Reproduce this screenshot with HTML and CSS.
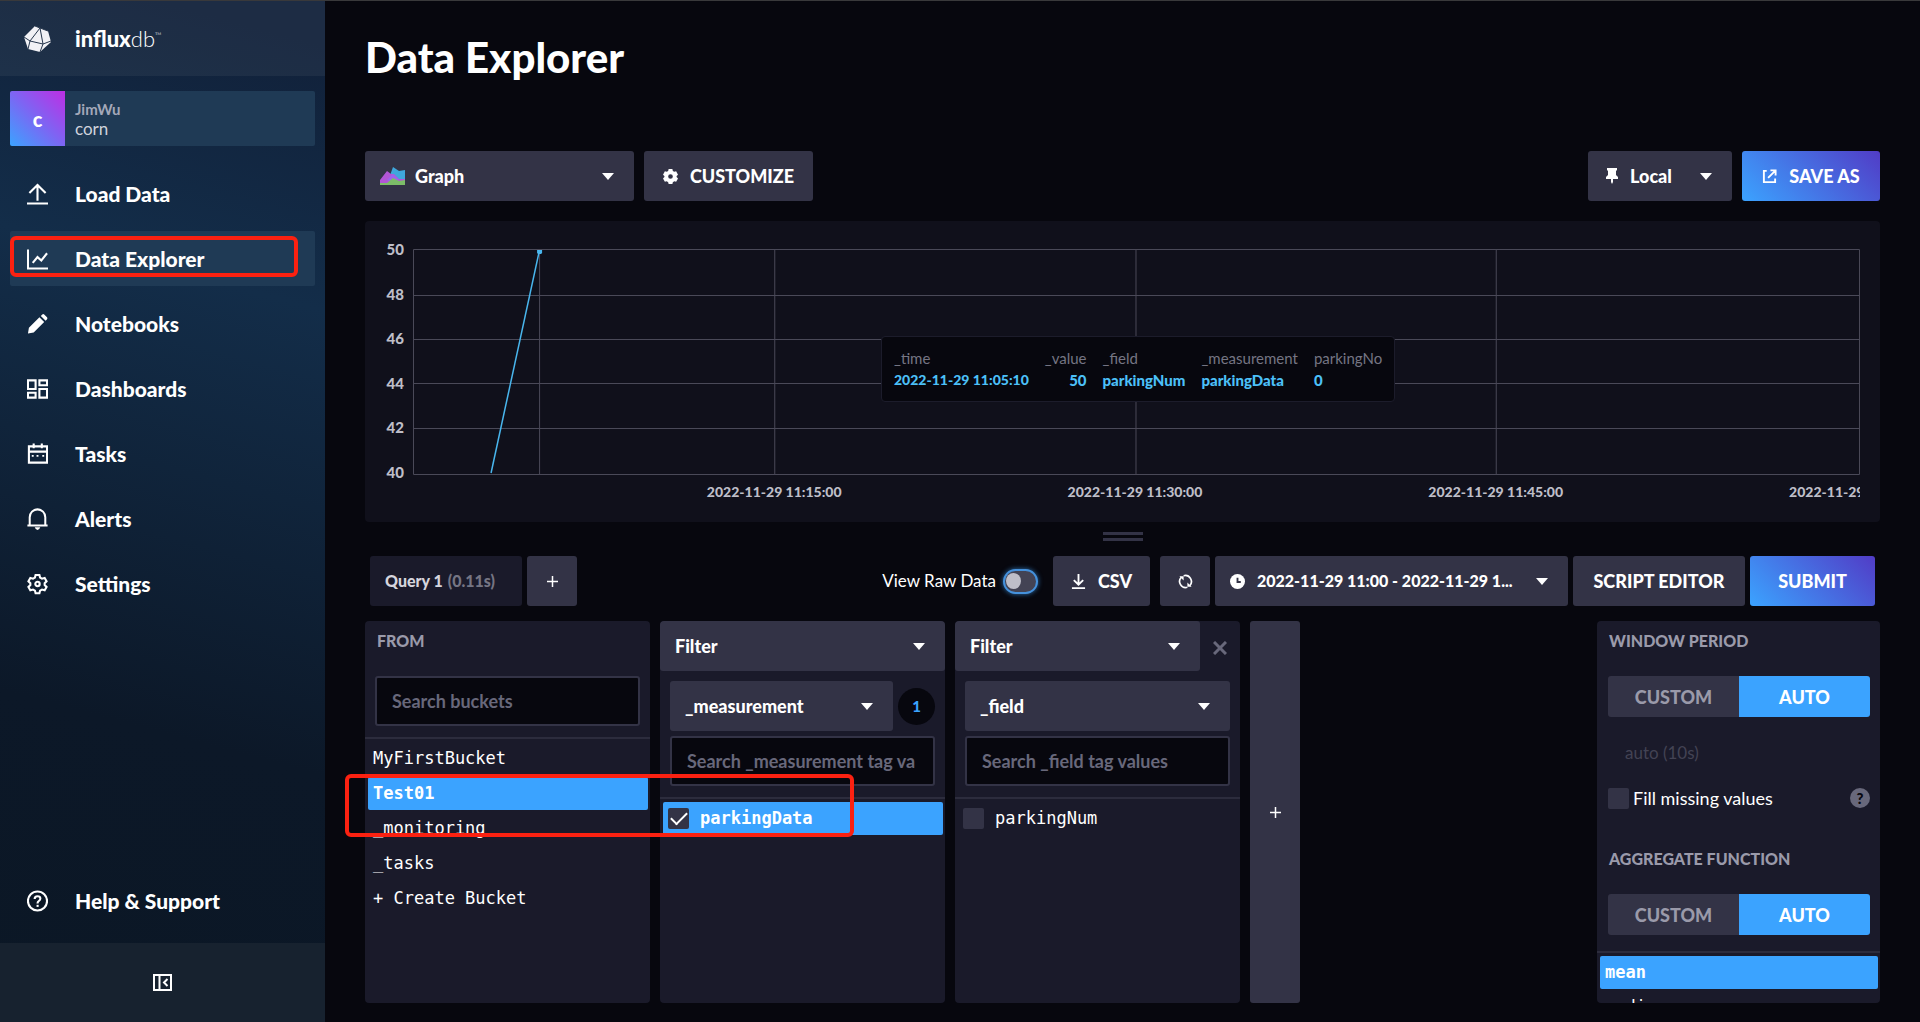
FILE: index.html
```html
<!DOCTYPE html>
<html lang="en">
<head>
<meta charset="utf-8">
<title>Data Explorer | InfluxDB</title>
<link rel="stylesheet" href="styles.css">
</head>
<body>
<svg class="sprite" width="0" height="0" aria-hidden="true">
  <symbol id="caret" viewBox="0 0 12 7"><path d="M0 0h12L6 7z" fill="currentColor"/></symbol>
  <symbol id="plus" viewBox="0 0 11 11"><path d="M5.500 0v11M0 5.500h11" stroke="currentColor" stroke-width="1.500"/></symbol>
</svg>
<div class="app">
  <nav class="sidebar">
    <a class="brand" href="#">
      <svg class="brand-mark" viewBox="0 0 27 27"><path d="M11 1L24 6L27 17L16 27L4 24L0 12z" fill="#f1f1f5"/><path d="M0 12l6 4 10-13L11 1M6 16l-2 8M16 3l8 3M16 3l3 16L6 16M19 19l-3 8M19 19l8-3" fill="none" stroke="#26364c"/></svg>
      <span class="brand-name"><b>influx</b>db<sup>™</sup></span>
    </a>
    <div class="menu">
      <a class="account" href="#">
        <span class="avatar">c</span>
        <span class="account-text"><b>JimWu</b><span>corn</span></span>
      </a>
      <a class="item" href="#"><svg viewBox="0 0 22 22"><path d="M11 18V2M2.500 10L11 1.500 19.500 10M0 21h22" /></svg>Load Data</a>
      <a class="item active" href="#"><svg viewBox="0 0 22 22"><path d="M1 1v20h21M6 15l5-6 4 3.500L21 5"/></svg>Data Explorer<span class="mark mark-nav"></span></a>
      <a class="item" href="#"><svg viewBox="0 0 22 22"><path class="solid" d="M1 21l1-6L13 4l5 5L7 20zM14.500 2.500L16 1q1-.7 2 0l3 3q.8 1 0 2l-1.500 1.500z"/></svg>Notebooks</a>
      <a class="item" href="#"><svg viewBox="0 0 22 22"><path d="M1 2h8v9H1zM13 2h8v5h-8zM1 15h8v5H1zM13 11h8v9h-8z"/></svg>Dashboards</a>
      <a class="item" href="#"><svg viewBox="0 0 22 22"><path d="M2 3h19v17H2zM2 8.500h19M7 0v5M15.500 0v5"/><path class="solid" d="M5 12h2v2H5zM10 12h2v2h-2zM16 12h2v2h-2z"/></svg>Tasks</a>
      <a class="item" href="#"><svg viewBox="0 0 22 24"><path d="M2.500 19v-9a8.500 8.500 0 0 1 17 0v9M0 19h22"/><path class="solid" d="M8 21h6q-1 3-3 3t-3-3z"/></svg>Alerts</a>
      <a class="item" href="#"><svg viewBox="0 0 22 22"><path d="M9 1.500h4l.7 2.800 2 1.100 2.800-.8 2 3.500-2 2v2l2 2-2 3.500-2.800-.8-2 1.100-.7 2.800H9l-.7-2.800-2-1.100-2.800.8-2-3.500 2-2v-2l-2-2 2-3.500 2.800.8 2-1.100z"/><circle cx="11" cy="11" r="2.300"/></svg>Settings</a>
      <a class="item help" href="#"><svg viewBox="0 0 22 22"><circle cx="11" cy="11" r="10"/><path d="M8 9q0-3 3-3t3 2.500q0 1.500-1.500 2.300T11 13.500"/><path class="solid" d="M10 15h2.200v2.200H10z"/></svg>Help &amp; Support</a>
    </div>
    <button class="collapse" aria-label="Collapse navigation"><svg viewBox="0 0 19 17"><path d="M1 1h17v15H1zM6.500 1v15M14.500 5L11 8.500l3.500 3.500" fill="none" stroke="currentColor" stroke-width="2"/></svg></button>
  </nav>

  <main class="main">
    <h1>Data Explorer</h1>
    <div class="bar view-bar">
      <label class="drop drop-view">
        <svg class="graph-icon" viewBox="0 0 25 18"><path d="M8 14L13 0l6 4 6-1v10z" fill="#3fa7dc"/><path d="M0 13l7-9 4 3h3l5 5h6v3L0 17z" fill="#b256d6"/><path d="M7 13l6-6 6 6-6 3z" fill="#9d64ee"/><path d="M0 16h7l6-5 6 3 6-1v5H0z" fill="#7cbd68"/></svg>
        <select aria-label="View type"><option>Graph</option></select><svg class="caret"><use href="#caret"/></svg>
      </label>
      <button class="btn btn-customize"><svg class="ico" viewBox="0 0 16 16"><path fill="currentColor" fill-rule="evenodd" d="M6 0h4l.5 2L12 3l2-.5 2 3.500-1.500 1.500v1L16 10l-2 3.500-2-.5-1.500 1-.5 2H6l-.5-2L4 13l-2 .5L0 10l1.500-1.500v-1L0 6l2-3.500L4 3l1.500-1zM8 5.500a2.500 2.500 0 1 0 0 5 2.500 2.500 0 0 0 0-5z"/></svg>CUSTOMIZE</button>
      <span class="spring"></span>
      <label class="drop drop-zone">
        <svg class="pin" viewBox="0 0 12 16"><path fill="currentColor" d="M1 0h10v2l-1 1v4l2 2v2H7v3l-1 2-1-2v-3H0V9l2-2V3L1 2z"/></svg>
        <select aria-label="Time zone"><option>Local</option></select><svg class="caret"><use href="#caret"/></svg>
      </label>
      <button class="btn primary btn-save"><svg class="ico" viewBox="0 0 16 16"><path fill="none" stroke="currentColor" stroke-width="2" d="M5 2H2v12h12v-4M6.500 9.500L14 2M9 1.500h5.500V7"/></svg>SAVE AS</button>
    </div>

    <section class="chart">
      <div class="y-axis"><span>50</span><span>48</span><span>46</span><span>44</span><span>42</span><span>40</span></div>
      <svg class="plot" viewBox="0 0 1446 226" preserveAspectRatio="none">
        <path class="grid" d="M.5.500h1445v225H.5zM0 46.500h1446M0 90.500h1446M0 134.500h1446M0 179.500h1446M361.500 0v226M722.500 0v226M1082.500 0v226M126.500 0v226"/>
        <path class="series" d="M78 224L126 3"/>
        <path class="dot" d="M124 1h5v3l-1 1h-3l-1-1z"/>
      </svg>
      <div class="x-axis"><span>2022-11-29 11:15:00</span><span>2022-11-29 11:30:00</span><span>2022-11-29 11:45:00</span><span>2022-11-29 12:00:00</span></div>
      <div class="tip">
        <table>
          <thead><tr><th>_time</th><th class="num">_value</th><th>_field</th><th>_measurement</th><th>parkingNo</th></tr></thead>
          <tbody><tr><td class="stamp">2022-11-29 11:05:10</td><td class="num">50</td><td>parkingNum</td><td>parkingData</td><td>0</td></tr></tbody>
        </table>
      </div>
    </section>

    <div class="handle"></div>

    <div class="bar query-bar">
      <button class="btn tab">Query 1 <span>(0.11s)</span></button>
      <button class="btn square" aria-label="Add query"><svg class="plus"><use href="#plus"/></svg></button>
      <span class="spring"></span>
      <label class="raw">View Raw Data<input type="checkbox" class="toggle"></label>
      <button class="btn btn-csv"><svg class="ico" viewBox="0 0 16 16"><path fill="none" stroke="currentColor" stroke-width="2" d="M8 0v11M3 6.500l5 5 5-5M1 15h14"/></svg>CSV</button>
      <button class="btn square" aria-label="Refresh"><svg class="ico" viewBox="0 0 16 16"><path fill="none" stroke="currentColor" stroke-width="1.800" d="M10 14.200A6.500 6.500 0 0 1 3.500 3.500M6 1.800a6.500 6.500 0 0 1 6.500 10.700"/><path fill="currentColor" d="M1.500 2.500h4.500v4.500zM14.500 13.500H10V9z"/></svg></button>
      <label class="drop drop-time">
        <svg class="ico" viewBox="0 0 16 16"><circle cx="8" cy="8" r="8" fill="currentColor"/><path d="M8 4v4.500h3.500" fill="none" stroke="#333346" stroke-width="2"/></svg>
        <select aria-label="Time range"><option>2022-11-29 11:00 - 2022-11-29 1...</option></select><svg class="caret"><use href="#caret"/></svg>
      </label>
      <button class="btn btn-script">SCRIPT EDITOR</button>
      <button class="btn primary btn-submit">SUBMIT</button>
    </div>

    <section class="builder">
      <div class="card">
        <h2>FROM</h2>
        <div class="fields from-fields"><input class="text" type="text" placeholder="Search buckets" aria-label="Search buckets"></div>
        <ul class="list">
          <li><button>MyFirstBucket</button></li>
          <li><button class="on">Test01</button></li>
          <li><button>_monitoring</button></li>
          <li><button>_tasks</button></li>
          <li><button>+ Create Bucket</button></li>
        </ul>
      </div>
      <div class="card">
        <div class="card-head"><label class="drop"><select aria-label="Function"><option>Filter</option></select><svg class="caret"><use href="#caret"/></svg></label></div>
        <div class="fields">
          <div class="row"><label class="drop"><select aria-label="Tag key"><option>_measurement</option></select><svg class="caret"><use href="#caret"/></svg></label><span class="count">1</span></div>
          <input class="text" type="text" placeholder="Search _measurement tag va" aria-label="Search _measurement tag values">
        </div>
        <ul class="list">
          <li><label class="on"><input type="checkbox" class="box" checked>parkingData</label></li>
        </ul>
      </div>
      <div class="card">
        <div class="card-head"><label class="drop"><select aria-label="Function"><option>Filter</option></select><svg class="caret"><use href="#caret"/></svg></label><button class="close" aria-label="Remove filter"><svg viewBox="0 0 14 14"><path d="M1 1l12 12M13 1L1 13" stroke="currentColor" stroke-width="3"/></svg></button></div>
        <div class="fields">
          <div class="row"><label class="drop"><select aria-label="Tag key"><option>_field</option></select><svg class="caret"><use href="#caret"/></svg></label></div>
          <input class="text" type="text" placeholder="Search _field tag values" aria-label="Search _field tag values">
        </div>
        <ul class="list">
          <li><label><input type="checkbox" class="box">parkingNum</label></li>
        </ul>
      </div>
      <button class="add" aria-label="Add filter"><svg class="plus"><use href="#plus"/></svg></button>
      <span class="spring"></span>
      <div class="card options">
        <h2>WINDOW PERIOD</h2>
        <div class="switch"><button>CUSTOM</button><button class="on">AUTO</button></div>
        <input class="auto" type="text" value="auto (10s)" disabled aria-label="Window period">
        <div class="fill"><label><input type="checkbox" class="box">Fill missing values</label><button class="q" aria-label="Help">?</button></div>
        <h2>AGGREGATE FUNCTION</h2>
        <div class="switch"><button>CUSTOM</button><button class="on">AUTO</button></div>
        <ul class="list">
          <li><button class="on">mean</button></li>
          <li><button>median</button></li>
        </ul>
      </div>
      <span class="mark mark-builder"></span>
    </section>
  </main>
</div>
</body>
</html>
```
FILE: styles.css
```css
* { box-sizing: border-box; }

body {
  margin: 0;
  background: #07070e;
  color: #fff;
  font: 17px/20px Lato, "Liberation Sans", sans-serif;
}

button, input, select { font: inherit; color: inherit; border: 0; margin: 0; padding: 0; background: none; }
a { color: inherit; text-decoration: none; }
ul { list-style: none; margin: 0; padding: 0; }
h1, h2 { margin: 0; }
svg { flex: none; }
.sprite { position: absolute; }
.spring { flex: 1; }

.app { display: flex; height: 100vh; border-top: 1px solid #39393b; overflow: hidden; }

/* Sidebar */
.sidebar {
  flex: none;
  width: 325px;
  display: flex;
  flex-direction: column;
  background: linear-gradient(195deg, #11213a 4%, #132d49 28%, #0c1828 70%, #0b1725 100%);
}
.brand { display: flex; align-items: center; gap: 24px; height: 75px; padding-left: 24px; background: rgba(255, 255, 255, .05); }
.brand-mark { width: 27px; height: 27px; }
.brand-name { font-size: 22px; line-height: 24px; font-weight: 300; }
.brand-name b { font-weight: 900; }
.brand-name sup { font-size: 9px; line-height: 9px; vertical-align: 8px; }
.menu { flex: 1; display: flex; flex-direction: column; gap: 10px; padding: 15px 10px; }
.account { display: flex; height: 55px; margin-bottom: 10px; background: #1f3a55; border-radius: 2px; overflow: hidden; }
.avatar { width: 55px; display: grid; place-items: center; background: linear-gradient(45deg, #3ba3ff, #7d65f3 50%, #be2ee4); font-size: 20px; font-weight: 900; }
.account-text { display: flex; flex-direction: column; justify-content: center; padding-left: 10px; font-size: 17px; line-height: 19px; color: #d0d3dc; }
.account-text b { font-size: 15px; color: #a3a8b9; }
.item { position: relative; display: flex; align-items: center; gap: 27px; height: 55px; padding-left: 17px; border-radius: 2px; font-size: 21px; line-height: 24px; font-weight: 900; }
.item svg { width: 21px; height: 22px; fill: none; stroke: #fff; stroke-width: 2.200; }
.item .solid { fill: #fff; stroke: none; }
.item.active { background: #1f3a55; }
.item.help { margin-top: auto; }
.collapse { height: 79px; display: grid; place-items: center; background: #17222f; }
.collapse svg { width: 19px; height: 17px; }

/* Red call-out boxes */
.mark { position: absolute; border: 4px solid #fb2111; border-radius: 6px; pointer-events: none; }
.mark-nav { left: 0; top: 5px; width: 288px; height: 41px; }
.mark-builder { left: -20px; top: 153px; width: 509px; height: 63px; }

/* Main column */
.main { flex: 1; min-width: 0; display: flex; flex-direction: column; padding: 32px 40px 19px; }
h1 { font-size: 42px; line-height: 48px; font-weight: 900; margin-bottom: 70px; }
.bar { display: flex; flex: none; }
.view-bar { gap: 10px; margin-bottom: 20px; }
.btn { display: flex; align-items: center; justify-content: center; gap: 12px; height: 50px; background: #333346; border-radius: 3px; font-size: 18px; font-weight: 900; white-space: nowrap; }
.primary { background: linear-gradient(45deg, #3ba3ff, #513cc6); }
.ico { width: 15px; height: 15px; }
.drop { display: flex; align-items: center; height: 50px; padding: 0 20px 0 15px; background: #333346; border-radius: 3px; font-size: 18px; font-weight: 900; }
.drop select { flex: 1; min-width: 0; appearance: none; outline: 0; }
.caret { width: 12px; height: 7px; }
.drop-view { width: 269px; gap: 10px; }
.graph-icon { width: 25px; height: 18px; }
.btn-customize { width: 169px; }
.drop-zone { width: 144px; gap: 12px; padding-left: 18px; }
.pin { width: 12px; height: 16px; }
.btn-save { width: 138px; }

/* Chart */
.chart {
  position: relative;
  flex: 1 1 301px;
  min-height: 0;
  display: grid;
  grid-template: minmax(0, 1fr) 20px / 28px minmax(0, 1fr);
  gap: 7px 9px;
  padding: 28px 20px 20px 11px;
  background: #10101b;
  border-radius: 4px;
  color: #bebec8;
  font-size: 14px;
  line-height: 20px;
  font-weight: 900;
}
.y-axis { display: flex; flex-direction: column; justify-content: space-between; text-align: right; margin: -10px 0 -7px; font-size: 15px; }
.plot { width: 100%; height: 100%; }
.plot path { vector-effect: non-scaling-stroke; }
.grid { fill: none; stroke: #4a4958; }
.series { stroke: #49b6ee; stroke-width: 1.500; }
.dot { fill: #49b6ee; }
.x-axis { grid-column: 2; display: flex; overflow: hidden; white-space: nowrap; text-align: center; }
.x-axis span { flex: 0 0 24.930%; }
.x-axis span:first-child { margin-left: 12.500%; }
.tip { position: absolute; left: 516px; top: 115px; padding: 10px 12px; background: #07070e; border: 1px solid #1c1c2b; border-radius: 4px; font-size: 15px; }
.tip table { border-collapse: collapse; }
.tip th, .tip td { padding: 1px 16px 1px 0; text-align: left; white-space: nowrap; }
.tip tr > :last-child { padding-right: 0; }
.tip th { font-weight: 400; color: #757583; }
.tip td { color: #4cc0f8; font-weight: 900; }
.tip .stamp { font-size: 14px; }
.tip .num { text-align: right; }

.handle { flex: none; align-self: center; width: 40px; height: 9px; margin: 10px 0 15px; border: solid #333346; border-width: 3px 0; }

/* Query toolbar */
.query-bar { align-items: center; gap: 5px; padding: 0 5px; margin-bottom: 15px; }
.tab { width: 152px; justify-content: flex-start; padding-left: 15px; background: #1a1a2a; color: #d5d5dd; font-size: 16px; gap: 5px; }
.tab span { color: #757583; }
.square { width: 50px; }
.plus { width: 11px; height: 11px; }
.raw { display: flex; align-items: center; gap: 7px; margin-right: 10px; }
.toggle { appearance: none; width: 35px; height: 25px; border: 2px solid #4591dc; border-radius: 13px; background: #434354; box-shadow: 0 0 5px #2c6fae; display: flex; align-items: center; }
.toggle::before { content: ""; width: 15px; height: 16px; margin-left: 1px; border-radius: 50%; background: #bebec8; }
.btn-csv { width: 97px; margin-right: 5px; }
.drop-time { width: 353px; gap: 12px; font-size: 16px; }
.btn-script { width: 172px; }
.btn-submit { width: 125px; }

/* Query builder */
.builder { position: relative; flex: 1 1 382px; min-height: 0; display: flex; gap: 10px; }
.card { flex: none; width: 285px; background: #1a1a2a; border-radius: 4px; overflow: hidden; }
.card h2 { padding: 10px 12px 25px; font-size: 16px; line-height: 20px; font-weight: 900; color: #9a9aaa; }
.card-head { display: flex; }
.card-head .drop { flex: 1; }
.close { width: 40px; color: #68687b; }
.close svg { width: 14px; height: 14px; vertical-align: middle; }
.fields { display: flex; flex-direction: column; gap: 5px; padding: 10px 10px 11px; border-bottom: 2px solid #2c2c3d; }
.from-fields { padding-top: 0; }
.row { display: flex; align-items: center; gap: 5px; }
.row .drop { flex: 1; min-width: 0; }
.count { width: 37px; height: 37px; display: grid; place-items: center; border-radius: 50%; background: #07070e; color: #3ba3ff; font-size: 15px; font-weight: 900; }
.text { width: 100%; height: 50px; padding: 0 15px; background: #07070e; border: 2px solid #333346; border-radius: 3px; font-size: 18px; font-weight: 700; }
.text::placeholder { color: #68687b; opacity: 1; }
.list { display: flex; flex-direction: column; gap: 2px; padding: 3px 2px 0 3px; font: 17px/33px "DejaVu Sans Mono", "Liberation Mono", monospace; }
.list button, .list label { display: flex; align-items: center; width: 100%; height: 33px; padding: 0 5px; border-radius: 2px; }
.list label { gap: 11px; }
.list .on { background: #3ba3ff; font-weight: 700; }
.box { appearance: none; flex: none; width: 21px; height: 21px; border-radius: 2px; background: #333346; }
.box:checked { display: grid; place-items: center; }
.box:checked::before { content: ""; width: 14px; height: 7px; margin-top: -4px; border: solid #fff; border-width: 0 0 2px 2px; transform: rotate(-45deg); }
.add { width: 50px; flex: none; background: #333346; border-radius: 3px; }
.options { width: 283px; }
.switch { display: flex; height: 41px; margin: 0 10px 0 11px; border-radius: 3px; overflow: hidden; }
.switch button { flex: 1; background: #333346; color: #9a9aaa; font-size: 18px; font-weight: 900; }
.switch .on { background: #3ba3ff; color: #fff; }
.auto { display: block; height: 30px; width: 200px; margin: 20px 28px 21px; color: #434354; }
.fill { display: flex; align-items: center; justify-content: space-between; height: 20px; margin: 0 10px 31px 11px; }
.fill label { display: flex; align-items: center; gap: 4px; font-size: 18px; }
.q { width: 20px; height: 20px; border-radius: 50%; background: #68687b; color: #07070e; font-size: 15px; font-weight: 900; }
.options .list { margin-top: 16px; border-top: 2px solid #2c2c3d; }
```
